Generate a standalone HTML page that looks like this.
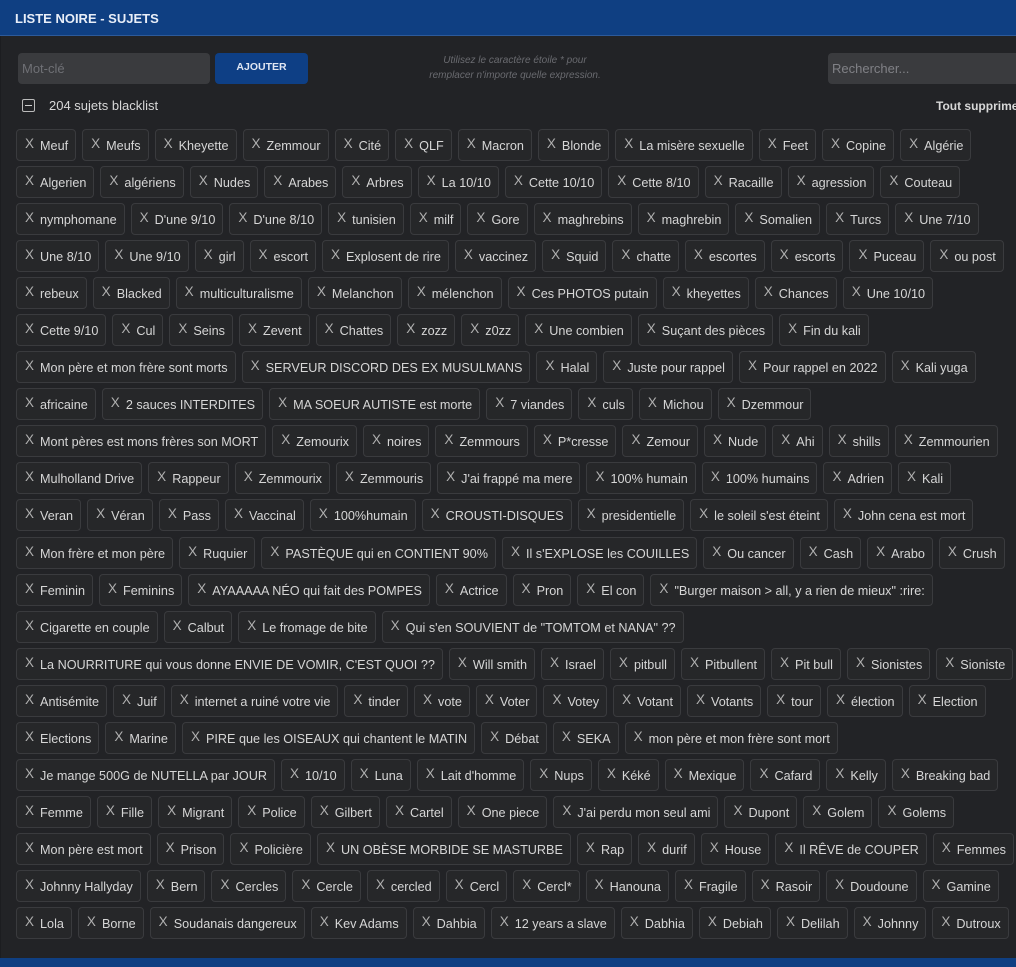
<!DOCTYPE html>
<html><head><meta charset="utf-8"><style>
*{box-sizing:border-box;margin:0;padding:0}
html,body{width:1016px;height:967px;overflow:hidden;background:#1c1d20;font-family:"Liberation Sans",sans-serif}
.hdr{position:absolute;left:0;top:0;width:1016px;height:36px;background:#0f3f82;border-bottom:1px solid #2d5a9a;color:#e8eef8;font-weight:bold;font-size:13px;padding:11px 15px}
.panel{position:absolute;left:1px;top:36px;width:1015px;height:922px;background:#222326}
.inp{position:absolute;left:18px;top:53px;width:192px;height:31px;background:#3a3b3e;border-radius:4px;color:#6f7075;font-size:13px;padding:8px 4px}
.btn{position:absolute;left:215px;top:53px;width:93px;height:31px;background:#0e3f85;border-radius:4px;color:#dfe6f2;font-size:10.5px;font-weight:bold;text-align:center;line-height:29px}
.hint{position:absolute;left:400px;top:53px;width:230px;text-align:center;font-style:italic;font-size:10px;line-height:15px;color:#6a6b70}
.search{position:absolute;left:828px;top:53px;width:200px;height:31px;background:#3a3b3e;border-radius:4px;color:#808186;font-size:13px;padding:8px 4px}
.count{position:absolute;left:22px;top:98px;color:#d8d8d8;font-size:13px}
.count .box{display:inline-block;width:13px;height:13px;border:1.5px solid #bbb;border-radius:2px;vertical-align:-2px;margin-right:14px;position:relative}
.count .box:after{content:"";position:absolute;left:2px;right:2px;top:4.5px;height:1.5px;background:#ccc}
.all{position:absolute;left:936px;top:99px;color:#d8d8d8;font-size:12px;font-weight:bold;white-space:nowrap}
.rows{position:absolute;left:16px;top:129px}
.row{display:flex;height:32px;margin-bottom:5.05px;white-space:nowrap}
.t{height:32px;border:1px solid #3a3b3e;border-radius:4px;background:#262729;color:#d6d6d6;font-size:12.65px;line-height:31px;padding:0 7px 0 8px;margin-right:6px}
.t:before{content:"X";color:#b0b0b0;font-size:13.5px;margin-right:6px;position:relative;top:-2px}
.bot{position:absolute;left:0;top:958px;width:1016px;height:9px;background:#0f3f82}
</style></head><body>
<div class="hdr">LISTE NOIRE - SUJETS</div>
<div class="panel"></div>
<div class="inp">Mot-clé</div>
<div class="btn">AJOUTER</div>
<div class="hint">Utilisez le caractère étoile * pour<br>remplacer n'importe quelle expression.</div>
<div class="search">Rechercher...</div>
<div class="count"><span class="box"></span>204 sujets blacklist</div>
<div class="all">Tout supprimer</div>
<div class="rows">
<div class="row"><span class="t">Meuf</span><span class="t">Meufs</span><span class="t">Kheyette</span><span class="t">Zemmour</span><span class="t">Cité</span><span class="t">QLF</span><span class="t">Macron</span><span class="t">Blonde</span><span class="t">La misère sexuelle</span><span class="t">Feet</span><span class="t">Copine</span><span class="t">Algérie</span></div>
<div class="row"><span class="t">Algerien</span><span class="t">algériens</span><span class="t">Nudes</span><span class="t">Arabes</span><span class="t">Arbres</span><span class="t">La 10/10</span><span class="t">Cette 10/10</span><span class="t">Cette 8/10</span><span class="t">Racaille</span><span class="t">agression</span><span class="t">Couteau</span></div>
<div class="row"><span class="t">nymphomane</span><span class="t">D'une 9/10</span><span class="t">D'une 8/10</span><span class="t">tunisien</span><span class="t">milf</span><span class="t">Gore</span><span class="t">maghrebins</span><span class="t">maghrebin</span><span class="t">Somalien</span><span class="t">Turcs</span><span class="t">Une 7/10</span></div>
<div class="row"><span class="t">Une 8/10</span><span class="t">Une 9/10</span><span class="t">girl</span><span class="t">escort</span><span class="t">Explosent de rire</span><span class="t">vaccinez</span><span class="t">Squid</span><span class="t">chatte</span><span class="t">escortes</span><span class="t">escorts</span><span class="t">Puceau</span><span class="t">ou post</span></div>
<div class="row"><span class="t">rebeux</span><span class="t">Blacked</span><span class="t">multiculturalisme</span><span class="t">Melanchon</span><span class="t">mélenchon</span><span class="t">Ces PHOTOS putain</span><span class="t">kheyettes</span><span class="t">Chances</span><span class="t">Une 10/10</span></div>
<div class="row"><span class="t">Cette 9/10</span><span class="t">Cul</span><span class="t">Seins</span><span class="t">Zevent</span><span class="t">Chattes</span><span class="t">zozz</span><span class="t">z0zz</span><span class="t">Une combien</span><span class="t">Suçant des pièces</span><span class="t">Fin du kali</span></div>
<div class="row"><span class="t">Mon père et mon frère sont morts</span><span class="t">SERVEUR DISCORD DES EX MUSULMANS</span><span class="t">Halal</span><span class="t">Juste pour rappel</span><span class="t">Pour rappel en 2022</span><span class="t">Kali yuga</span></div>
<div class="row"><span class="t">africaine</span><span class="t">2 sauces INTERDITES</span><span class="t">MA SOEUR AUTISTE est morte</span><span class="t">7 viandes</span><span class="t">culs</span><span class="t">Michou</span><span class="t">Dzemmour</span></div>
<div class="row"><span class="t">Mont pères est mons frères son MORT</span><span class="t">Zemourix</span><span class="t">noires</span><span class="t">Zemmours</span><span class="t">P*cresse</span><span class="t">Zemour</span><span class="t">Nude</span><span class="t">Ahi</span><span class="t">shills</span><span class="t">Zemmourien</span></div>
<div class="row"><span class="t">Mulholland Drive</span><span class="t">Rappeur</span><span class="t">Zemmourix</span><span class="t">Zemmouris</span><span class="t">J'ai frappé ma mere</span><span class="t">100% humain</span><span class="t">100% humains</span><span class="t">Adrien</span><span class="t">Kali</span></div>
<div class="row"><span class="t">Veran</span><span class="t">Véran</span><span class="t">Pass</span><span class="t">Vaccinal</span><span class="t">100%humain</span><span class="t">CROUSTI-DISQUES</span><span class="t">presidentielle</span><span class="t">le soleil s'est éteint</span><span class="t">John cena est mort</span></div>
<div class="row"><span class="t">Mon frère et mon père</span><span class="t">Ruquier</span><span class="t">PASTÈQUE qui en CONTIENT 90%</span><span class="t">Il s'EXPLOSE les COUILLES</span><span class="t">Ou cancer</span><span class="t">Cash</span><span class="t">Arabo</span><span class="t">Crush</span></div>
<div class="row"><span class="t">Feminin</span><span class="t">Feminins</span><span class="t">AYAAAAA NÉO qui fait des POMPES</span><span class="t">Actrice</span><span class="t">Pron</span><span class="t">El con</span><span class="t">"Burger maison &gt; all, y a rien de mieux" :rire:</span></div>
<div class="row"><span class="t">Cigarette en couple</span><span class="t">Calbut</span><span class="t">Le fromage de bite</span><span class="t">Qui s'en SOUVIENT de "TOMTOM et NANA" ??</span></div>
<div class="row"><span class="t">La NOURRITURE qui vous donne ENVIE DE VOMIR, C'EST QUOI ??</span><span class="t">Will smith</span><span class="t">Israel</span><span class="t">pitbull</span><span class="t">Pitbullent</span><span class="t">Pit bull</span><span class="t">Sionistes</span><span class="t">Sioniste</span></div>
<div class="row"><span class="t">Antisémite</span><span class="t">Juif</span><span class="t">internet a ruiné votre vie</span><span class="t">tinder</span><span class="t">vote</span><span class="t">Voter</span><span class="t">Votey</span><span class="t">Votant</span><span class="t">Votants</span><span class="t">tour</span><span class="t">élection</span><span class="t">Election</span></div>
<div class="row"><span class="t">Elections</span><span class="t">Marine</span><span class="t">PIRE que les OISEAUX qui chantent le MATIN</span><span class="t">Débat</span><span class="t">SEKA</span><span class="t">mon père et mon frère sont mort</span></div>
<div class="row"><span class="t">Je mange 500G de NUTELLA par JOUR</span><span class="t">10/10</span><span class="t">Luna</span><span class="t">Lait d'homme</span><span class="t">Nups</span><span class="t">Kéké</span><span class="t">Mexique</span><span class="t">Cafard</span><span class="t">Kelly</span><span class="t">Breaking bad</span></div>
<div class="row"><span class="t">Femme</span><span class="t">Fille</span><span class="t">Migrant</span><span class="t">Police</span><span class="t">Gilbert</span><span class="t">Cartel</span><span class="t">One piece</span><span class="t">J'ai perdu mon seul ami</span><span class="t">Dupont</span><span class="t">Golem</span><span class="t">Golems</span></div>
<div class="row"><span class="t">Mon père est mort</span><span class="t">Prison</span><span class="t">Policière</span><span class="t">UN OBÈSE MORBIDE SE MASTURBE</span><span class="t">Rap</span><span class="t">durif</span><span class="t">House</span><span class="t">Il RÊVE de COUPER</span><span class="t">Femmes</span></div>
<div class="row"><span class="t">Johnny Hallyday</span><span class="t">Bern</span><span class="t">Cercles</span><span class="t">Cercle</span><span class="t">cercled</span><span class="t">Cercl</span><span class="t">Cercl*</span><span class="t">Hanouna</span><span class="t">Fragile</span><span class="t">Rasoir</span><span class="t">Doudoune</span><span class="t">Gamine</span></div>
<div class="row"><span class="t">Lola</span><span class="t">Borne</span><span class="t">Soudanais dangereux</span><span class="t">Kev Adams</span><span class="t">Dahbia</span><span class="t">12 years a slave</span><span class="t">Dabhia</span><span class="t">Debiah</span><span class="t">Delilah</span><span class="t">Johnny</span><span class="t">Dutroux</span></div>
</div>
<div class="bot"></div>
</body></html>
